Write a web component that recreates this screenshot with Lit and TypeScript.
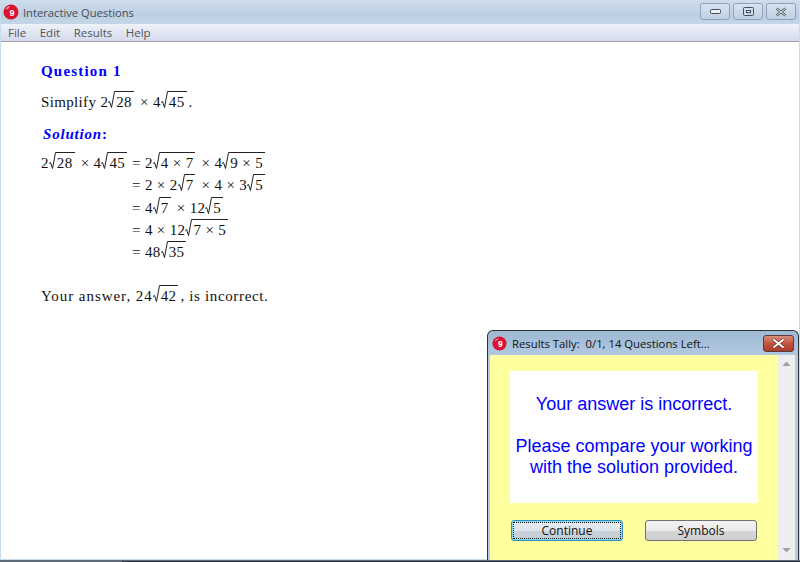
import { html, css, LitElement } from "lit";
import { customElement } from "lit/decorators.js";

const ball = (size: number) => html`<svg class="ball" width=${size} height=${size} viewBox="0 0 16 16">
  <circle cx="8" cy="8" r="7.5" fill="#d9122e" />
  <path d="M2.5 6 A6 6 0 0 1 7 2 L6 4 Z" fill="#f59aa5" />
  <text x="9" y="11.5" text-anchor="middle" font-size="9" font-weight="bold" font-family="Liberation Sans" fill="#fff">9</text>
</svg>`;

const rad = (arg: string) => html`<span class="rad"><svg width="7" height="18" viewBox="0 0 7 18"><path d="M0 11.5 L1.5 10.5 L3.5 16.5 L6.5 0.5 L7 0.5" fill="none" stroke="#222" stroke-width="1" /></svg><span class="arg">${arg}</span></span>`;

@customElement("app-root")
export class AppRoot extends LitElement {
  static styles = css`
    :host {
      display: block;
      position: relative;
      width: 800px;
      height: 562px;
      overflow: hidden;
      background: #fff;
      font-family: "Liberation Serif", serif;
      color: #111;
    }

    .frame {
      display: flex;
      flex-direction: column;
      border-left: 1px solid #c9dcee;
      border-right: 1px solid #c9dcee;
      box-sizing: border-box;
      height: 562px;
    }

    .titlebar {
      display: flex;
      align-items: center;
      gap: 4px;
      height: 24px;
      padding-left: 2px;
      background: linear-gradient(#cfdeed, #bccfe2 60%, #c4d6e8);
      font: 11.2px "Open Sans", sans-serif;
      color: #4a4a54;
    }

    .controls {
      display: flex;
      gap: 3px;
      margin-left: auto;
      margin-right: 3px;
      margin-top: 3px;
      align-self: flex-start;
    }

    .ctl {
      display: flex;
      align-items: center;
      justify-content: center;
      width: 28px;
      height: 15px;
      border: 1px solid #8fa1b6;
      border-radius: 3px;
      background: linear-gradient(#d6e3f0, #bfd0e2);
    }

    .menubar {
      display: flex;
      gap: 13.5px;
      height: 17px;
      padding-left: 7px;
      align-items: center;
      background: linear-gradient(#eef2f9, #d3daec);
      border-bottom: 1px solid #a0a0aa;
      font: 11.5px "Open Sans", sans-serif;
      color: #555;
    }

    .content {
      flex: 1;
      padding: 20px 0 0 40px;
      font-size: 15px;
      letter-spacing: 0.35px;
      border-bottom: 1px solid #c9dcee;
    }

    .edge {
      flex: none;
      height: 2px;
      margin: 0 -1px;
      background: linear-gradient(#5d6b78 1px, transparent 1px),
        linear-gradient(90deg, #5d6b78 122px, #2a3440 122px);
    }

    .heading {
      color: #0000ff;
      font-weight: bold;
      font-size: 15px;
      letter-spacing: 1.2px;
      line-height: 18px;
    }

    .solution {
      margin: 12px 0 0 2px;
      font-style: italic;
      letter-spacing: 0.8px;
    }

    .colon {
      font-style: normal;
    }

    .line {
      display: flex;
      align-items: baseline;
      white-space: pre;
      height: 22px;
      line-height: 22px;
    }

    .simplify {
      margin-top: 11px;
    }

    .working {
      display: grid;
      grid-template-columns: 91px auto;
      grid-auto-rows: 22.25px;
      margin-top: 9px;
      line-height: 22px;
      white-space: pre;
      width: max-content;
    }

    .working > span {
      display: flex;
      align-items: baseline;
    }

    .answer {
      margin-top: 22px;
      letter-spacing: 0.65px;
    }

    .lead {
      letter-spacing: 0.95px;
    }

    .rad {
      display: inline-flex;
      align-items: flex-start;
      height: 22px;
      align-self: center;
    }

    .rad svg {
      display: block;
      flex: none;
    }

    .arg {
      display: block;
      border-top: 1px solid #222;
      line-height: 20px;
      height: 20px;
      padding: 0 2px 0 1px;
      margin-right: 2px;
      letter-spacing: 0.35px;
    }

    .tally {
      position: absolute;
      left: 487px;
      top: 330px;
      width: 312px;
      height: 230px;
      box-sizing: border-box;
      border: 1px solid #30343a;
      border-bottom: none;
      border-radius: 6px 6px 0 0;
      padding: 0 3px 0 2px;
      background: linear-gradient(#9fb8d3, #b4cbe3 28px);
      display: flex;
      flex-direction: column;
    }

    .tally-title {
      display: flex;
      align-items: center;
      gap: 5px;
      height: 24px;
      padding-left: 2px;
      font: 11.3px "Open Sans", sans-serif;
      color: #111;
      white-space: pre;
    }

    .close {
      display: flex;
      align-items: center;
      justify-content: center;
      margin-left: auto;
      margin-right: 1px;
      width: 29px;
      height: 15px;
      border: 1px solid #5b3a3a;
      border-radius: 3px;
      background: linear-gradient(#d88f7e, #c25540 50%, #a83a2a);
    }

    .body {
      flex: 1;
      display: flex;
      min-height: 0;
    }

    .pane {
      flex: 1;
      display: flex;
      flex-direction: column;
      background: #ffff9f;
      padding: 16px 20px 0;
    }

    .message {
      height: 132px;
      flex: none;
      background: #fff;
      color: #0000ff;
      font: 18px/21px "Liberation Sans", sans-serif;
      text-align: center;
      padding-top: 23px;
      box-sizing: border-box;
    }

    .message p {
      margin: 0 0 21px;
    }

    .buttons {
      display: flex;
      justify-content: space-between;
      margin-top: 17px;
      padding: 0 1px;
    }

    button {
      width: 112px;
      height: 21px;
      padding: 0;
      border: 1px solid #707070;
      border-radius: 3px;
      background: linear-gradient(#f2f2f2, #ebebeb 50%, #d6d6d6 52%, #cfcfcf);
      font: 12px "Open Sans", sans-serif;
      color: #111;
    }

    button.primary {
      border-color: #2c8fc0;
      box-shadow: inset 0 0 0 1px #8fd8f0;
      background: linear-gradient(#e8eef2, #dde4ea 50%, #c8d2da 52%, #c4ced6);
      outline: 1px dotted #111;
      outline-offset: -3px;
    }

    .scroll {
      width: 17px;
      background: #eeeeee;
      display: flex;
      flex-direction: column;
      justify-content: space-between;
      align-items: center;
      padding: 6px 0 7px;
      box-sizing: border-box;
    }

    .tri {
      display: block;
    }
  `;

  render() {
    return html`
      <div class="frame">
        <div class="titlebar">
          ${ball(16)}<span>Interactive Questions</span>
          <div class="controls">
            <div class="ctl"><svg width="11" height="5"><rect x="0.5" y="0.5" width="10" height="4" rx="1" fill="#eef2f6" stroke="#454f5c" /></svg></div>
            <div class="ctl"><svg width="11" height="9"><rect x="0.5" y="0.5" width="10" height="8" rx="1" fill="none" stroke="#454f5c" /><rect x="3.5" y="3.5" width="4" height="2" fill="#eef2f6" stroke="#454f5c" /></svg></div>
            <div class="ctl"><svg width="12" height="10"><path d="M1.5 1.5 L10.5 8.5 M10.5 1.5 L1.5 8.5" stroke="#55606c" stroke-width="2.5" /><path d="M1.5 1.5 L10.5 8.5 M10.5 1.5 L1.5 8.5" stroke="#e6ebf0" stroke-width="1" /></svg></div>
          </div>
        </div>
        <div class="menubar">
          <span>File</span><span>Edit</span><span>Results</span><span>Help</span>
        </div>
        <div class="content">
          <div class="heading">Question 1</div>
          <div class="line simplify">Simplify 2${rad("28")} × 4${rad("45")}.</div>
          <div class="heading solution">Solution<span class="colon">:</span></div>
          <div class="working">
            <span>2${rad("28")} × 4${rad("45")}</span><span>= 2${rad("4 × 7")} × 4${rad("9 × 5")}</span>
            <span></span><span>= 2 × 2${rad("7")} × 4 × 3${rad("5")}</span>
            <span></span><span>= 4${rad("7")} × 12${rad("5")}</span>
            <span></span><span>= 4 × 12${rad("7 × 5")}</span>
            <span></span><span>= 48${rad("35")}</span>
          </div>
          <div class="line answer"><span class="lead">Your answer, 24</span>${rad("42")}, is incorrect.</div>
        </div>
        <div class="edge"></div>
      </div>
      <div class="tally">
        <div class="tally-title">
          ${ball(15)}<span>Results Tally:  0/1, 14 Questions Left...</span>
          <div class="close"><svg width="15" height="11"><path d="M2.5 1.5 L12.5 9.5 M12.5 1.5 L2.5 9.5" stroke="#6b2a20" stroke-width="3.4" /><path d="M2.5 1.5 L12.5 9.5 M12.5 1.5 L2.5 9.5" stroke="#fff" stroke-width="2" /></svg></div>
        </div>
        <div class="body">
          <div class="pane">
            <div class="message">
              <p>Your answer is incorrect.</p>
              <p>Please compare your working<br />with the solution provided.</p>
            </div>
            <div class="buttons">
              <button class="primary">Continue</button>
              <button>Symbols</button>
            </div>
          </div>
          <div class="scroll">
            <svg class="tri" width="9" height="5"><path d="M0.5 5 L4.5 0.5 L8.5 5 Z" fill="#a0a0a0" /></svg>
            <svg class="tri" width="9" height="5"><path d="M0.5 0 L4.5 4.5 L8.5 0 Z" fill="#a0a0a0" /></svg>
          </div>
        </div>
      </div>
    `;
  }
}
